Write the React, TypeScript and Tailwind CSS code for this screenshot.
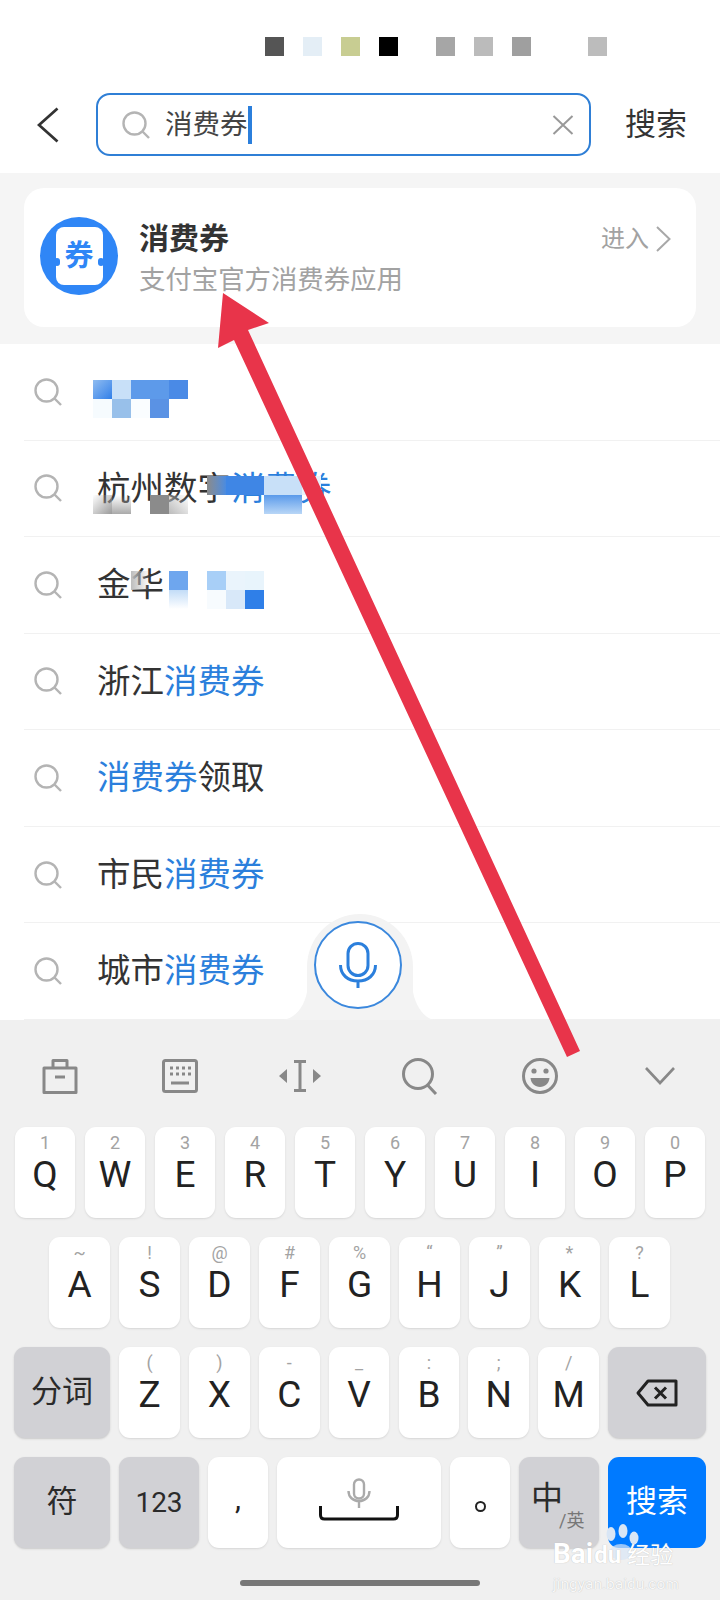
import type { ReactNode } from "react";

const STATUS_DOTS = [
  "bg-[#555555]",
  "bg-[#e4eef6]",
  "bg-[#c8cd92]",
  "bg-[#000000]",
  "ml-[19px] bg-[#a6a6a6]",
  "bg-[#bbbbbb]",
  "bg-[#9f9f9f]",
  "ml-[38px] bg-[#bcbcbc]",
];

const ROW_1 = [
  ["1", "Q"],
  ["2", "W"],
  ["3", "E"],
  ["4", "R"],
  ["5", "T"],
  ["6", "Y"],
  ["7", "U"],
  ["8", "I"],
  ["9", "O"],
  ["0", "P"],
];

const ROW_2 = [
  ["~", "A"],
  ["!", "S"],
  ["@", "D"],
  ["#", "F"],
  ["%", "G"],
  ["“", "H"],
  ["”", "J"],
  ["*", "K"],
  ["?", "L"],
];

const ROW_3 = [
  ["(", "Z"],
  [")", "X"],
  ["-", "C"],
  ["_", "V"],
  [":", "B"],
  [";", "N"],
  ["/", "M"],
];

function SearchGlyph({ className }: { className: string }) {
  return (
    <svg viewBox="0 0 28 28" fill="none" className={className}>
      <circle cx="12.5" cy="12.5" r="11" stroke="#b4b4b4" strokeWidth="2.4" />
      <path d="M20.5 20.5 27 27" stroke="#b4b4b4" strokeWidth="2.4" />
    </svg>
  );
}

function Mosaic({ className, cells }: { className: string; cells: string[] }) {
  return (
    <div className={`absolute grid grid-cols-[repeat(12,19px)] grid-rows-[19px_19px] ${className}`}>
      {cells.map((c, i) => (
        <div key={i} className={c} />
      ))}
    </div>
  );
}

function ResultRow({ children, mosaic }: { children: ReactNode; mosaic?: ReactNode }) {
  return (
    <div className="relative ml-6 flex items-center border-b border-[#f1f1f1]">
      <SearchGlyph className="ml-[10px] h-7 w-7" />
      <div className="ml-[35px] text-[33.5px] leading-none whitespace-nowrap text-[#333333]">{children}</div>
      {mosaic}
    </div>
  );
}

function Blue({ children }: { children: ReactNode }) {
  return <span className="text-[#2b7fdc]">{children}</span>;
}

function LetterKey({ hint, letter, className = "w-[60px]" }: { hint: string; letter: string; className?: string }) {
  return (
    <div className={`flex flex-col items-center rounded-[11px] bg-white pt-[5px] shadow-[0_1px_2px_#d6d6d6] ${className}`}>
      <span className="h-[22px] text-[18px] leading-[22px] text-[#a3a3a3]">{hint}</span>
      <span className="text-[37px] leading-[42px] text-[#222222]">{letter}</span>
    </div>
  );
}

function GreyKey({ children, className }: { children: ReactNode; className: string }) {
  return (
    <div className={`relative flex items-center justify-center rounded-[11px] bg-[#d1d1d5] text-[#2b2b2b] shadow-[0_1px_2px_#c9c9c9] ${className}`}>
      {children}
    </div>
  );
}

export default function App() {
  return (
    <div className="relative flex h-[1600px] w-[720px] flex-col overflow-hidden bg-white font-['Roboto','Noto_Sans_CJK_SC',sans-serif]">
      {/* status bar, blurred into squares */}
      <div className="flex h-[93px] gap-[19px] pt-[37px] pl-[265px]">
        {STATUS_DOTS.map((c, i) => (
          <div key={i} className={`h-[19px] w-[19px] ${c}`} />
        ))}
      </div>

      {/* search header */}
      <div className="flex h-[80px] items-start">
        <svg viewBox="0 0 22 36" fill="none" className="mt-[14px] ml-[37px] h-[36px] w-[22px]">
          <path d="M20.5 1.5 2 18l18.5 16.5" stroke="#333333" strokeWidth="2.8" />
        </svg>
        <div className="ml-[37px] flex h-[63px] w-[495px] items-center rounded-[14px] border-2 border-[#2f7fd6]">
          <SearchGlyph className="ml-[24px] h-7 w-7" />
          <span className="ml-[15px] text-[27.5px] leading-none text-[#444444]">消费券</span>
          <div className="h-[38px] w-1 bg-[#2b7fdc]" />
          <svg viewBox="0 0 22 20" fill="none" className="ml-auto mr-[15px] h-5 w-[22px]">
            <path d="M1.5 1 20.5 19M20.5 1 1.5 19" stroke="#999999" strokeWidth="2" />
          </svg>
        </div>
        <span className="ml-[34px] mt-[13px] text-[31px] leading-[38px] text-[#333333]">搜索</span>
      </div>

      {/* app result card */}
      <div className="h-[171px] bg-[#f5f5f5] px-6 pt-[15px]">
        <div className="flex h-[139px] rounded-[20px] bg-white pt-[29px] pl-4 pr-[25px]">
          <div className="relative flex h-[78px] w-[78px] items-center justify-center rounded-full bg-[#2f86f6]">
            <div className="flex h-[58px] w-[47px] items-center justify-center rounded-[8px] bg-white text-[29px] leading-none font-bold text-[#2f86f6]">
              券
            </div>
            <div className="absolute top-[41px] left-[14px] h-[8px] w-[6px] rounded-full bg-[#2f86f6]" />
            <div className="absolute top-[41px] right-[14px] h-[8px] w-[6px] rounded-full bg-[#2f86f6]" />
          </div>
          <div className="ml-[21px] flex flex-col">
            <span className="text-[30px] leading-[44px] font-bold text-[#333333]">消费券</span>
            <span className="mt-[-1px] text-[26.4px] leading-[40px] text-[#a2a2a2]">支付宝官方消费券应用</span>
          </div>
          <div className="ml-auto flex h-[44px] items-center gap-[7px]">
            <span className="text-[24px] text-[#a2a2a2]">进入</span>
            <svg viewBox="0 0 15 26" fill="none" className="h-[26px] w-[15px]">
              <path d="M1 1l12.5 12L1 25" stroke="#a8a8a8" strokeWidth="2" />
            </svg>
          </div>
        </div>
      </div>

      {/* suggestions */}
      <div className="grid h-[676px] grid-rows-7">
        <ResultRow
          mosaic={
            <Mosaic
              className="top-[36px] left-[69px]"
              cells={[
                "bg-linear-to-br from-[#8fbcf0] to-[#2f7fe8]",
                "bg-[#c8e0f8]",
                "bg-[#5d9aea]",
                "bg-[#5d9aea]",
                "bg-[#4a8ae6]",
                "", "", "", "", "", "", "",
                "bg-[#f6fbfe]",
                "bg-[#98c0ea]",
                "bg-[#fafdff]",
                "bg-[#5a92e4]",
              ]}
            />
          }
        >
          <Blue>&nbsp;</Blue>
        </ResultRow>
        <ResultRow
          mosaic={
            <Mosaic
              className="top-[35px] left-[69px]"
              cells={[
                "", "", "", "", "", "",
                "bg-linear-to-r from-[#8a8a8a] to-[#4a8be0]",
                "bg-[#3f86e5]",
                "bg-[#3f86e5]",
                "bg-[#c8e0f8]",
                "bg-[#c8e0f8]",
                "bg-[#e8f2fb]",
                "bg-linear-to-tl from-[#9a9a9a] to-transparent",
                "bg-linear-to-t from-[#aaaaaa] to-transparent",
                "",
                "bg-[#8b8b8b]",
                "bg-linear-to-tr from-[#bbbbbb] to-transparent",
                "",
                "",
                "",
                "",
                "bg-linear-to-b from-[#5a9aea] to-[#b8d6f6]",
                "bg-linear-to-b from-[#5a9aea] to-[#b8d6f6]",
              ]}
            />
          }
        >
          杭州数字<Blue>消费券</Blue>
        </ResultRow>
        <ResultRow
          mosaic={
            <Mosaic
              className="top-[34px] left-[69px]"
              cells={[
                "", "",
                "bg-linear-to-r from-[#bdbdbd] to-transparent",
                "",
                "bg-[#6ea6ee]",
                "",
                "bg-[#a8cff7]",
                "bg-[#eaf4fc]",
                "bg-[#e8f4fc]",
                "", "", "",
                "", "", "", "",
                "bg-linear-to-b from-[#c2dcf7] to-white",
                "",
                "bg-[#f7fbfe]",
                "bg-[#d8e8f9]",
                "bg-[#2f7fe8]",
              ]}
            />
          }
        >
          金华
        </ResultRow>
        <ResultRow>
          浙江<Blue>消费券</Blue>
        </ResultRow>
        <ResultRow>
          <Blue>消费券</Blue>领取
        </ResultRow>
        <ResultRow>
          市民<Blue>消费券</Blue>
        </ResultRow>
        <ResultRow>
          城市<Blue>消费券</Blue>
        </ResultRow>
      </div>

      {/* keyboard */}
      <div className="flex-1 bg-[#f0f0f0]">
        <div className="grid h-[107px] grid-cols-6 place-items-center pt-[5px]">
          <svg viewBox="0 0 36 36" fill="none" stroke="#888888" strokeWidth="3" className="h-9 w-9">
            <path d="M2 10h32v24.5H2z" strokeLinejoin="round" />
            <path d="M11 10V2.5h14V10" strokeLinejoin="round" />
            <path d="M13 19h10" />
          </svg>
          <svg viewBox="0 0 36 34" fill="none" className="h-[34px] w-9">
            <rect x="1.5" y="1.5" width="33" height="31" rx="2" stroke="#888888" strokeWidth="3" />
            <path d="M8 9h3M14 9h3M20 9h3M26 9h3M8 15h3M14 15h3M20 15h3M26 15h3" stroke="#888888" strokeWidth="3" />
            <path d="M9 24h18" stroke="#888888" strokeWidth="3" />
          </svg>
          <svg viewBox="0 0 42 32" fill="none" className="h-8 w-[42px]">
            <path d="M0 16 8 9v14zM42 16l-8-7v14z" fill="#888888" />
            <path d="M15 1.5h12M15 30.5h12M21 1.5v29" stroke="#888888" strokeWidth="3" />
          </svg>
          <svg viewBox="0 0 36 37" fill="none" className="h-[37px] w-9">
            <circle cx="16" cy="16" r="14.5" stroke="#888888" strokeWidth="3" />
            <path d="M25.5 27 34 36" stroke="#888888" strokeWidth="3" />
          </svg>
          <svg viewBox="0 0 36 36" fill="none" className="h-9 w-9">
            <circle cx="18" cy="18" r="16.5" stroke="#888888" strokeWidth="3" />
            <circle cx="12" cy="13" r="2.6" fill="#888888" />
            <circle cx="24" cy="13" r="2.6" fill="#888888" />
            <path d="M8.5 20h19c-.5 5.5-4.5 9-9.5 9s-9-3.500-9.500-9z" fill="#888888" />
          </svg>
          <svg viewBox="0 0 30 18" fill="none" className="h-[18px] w-[30px]">
            <path d="M1 1l14 15L29 1" stroke="#888888" strokeWidth="2.6" />
          </svg>
        </div>

        <div className="flex flex-col gap-[19px]">
          <div className="flex h-[91px] gap-[10px] pl-[15px]">
            {ROW_1.map(([hint, letter]) => (
              <LetterKey key={letter} hint={hint} letter={letter} />
            ))}
          </div>
          <div className="flex h-[91px] gap-[9px] pl-[49px]">
            {ROW_2.map(([hint, letter]) => (
              <LetterKey key={letter} hint={hint} letter={letter} className="w-[61px]" />
            ))}
          </div>
          <div className="flex h-[91px] gap-[9.25px] pl-[14px]">
            <GreyKey className="w-[96px] text-[31px]">分词</GreyKey>
            {ROW_3.map(([hint, letter]) => (
              <LetterKey key={letter} hint={hint} letter={letter} className="w-[60.6px]" />
            ))}
            <GreyKey className="w-[98px]">
              <svg viewBox="0 0 42 28" fill="none" className="h-7 w-[42px]">
                <path d="M12 2h28v24H12L2 14z" stroke="#222222" strokeWidth="3" strokeLinejoin="round" />
                <path d="M19 8.500l11 11M30 8.500l-11 11" stroke="#222222" strokeWidth="3" />
              </svg>
            </GreyKey>
          </div>
          <div className="flex h-[91px] gap-[9px] pl-[14px]">
            <GreyKey className="w-[96px] text-[31px]">符</GreyKey>
            <GreyKey className="w-[80px] text-[28px]">123</GreyKey>
            <div className="flex w-[60px] items-center justify-center rounded-[11px] bg-white pb-2 text-[30px] text-[#222222] shadow-[0_1px_2px_#d6d6d6]">
              ,
            </div>
            <div className="flex w-[164px] flex-col items-center rounded-[11px] bg-white pt-[21px] shadow-[0_1px_2px_#d6d6d6]">
              <svg viewBox="0 0 24 30" fill="none" className="h-[30px] w-6">
                <rect x="7" y="1.500" width="10" height="19" rx="5" stroke="#aaaaaa" strokeWidth="2.4" />
                <path d="M1.500 13c0 6 4.500 10 10.500 10s10.500-4 10.500-10M12 23v7" stroke="#aaaaaa" strokeWidth="2.4" />
              </svg>
              <svg viewBox="0 0 80 16" fill="none" className="-mt-[3px] h-4 w-20">
                <path d="M1.500 1v9c0 2.500 1.500 4 4 4h69c2.500 0 4-1.500 4-4V1" stroke="#111111" strokeWidth="3" />
              </svg>
            </div>
            <div className="flex w-[60px] items-center justify-center rounded-[11px] bg-white pt-2 text-[28px] text-[#222222] shadow-[0_1px_2px_#d6d6d6]">
              <div className="h-[11px] w-[11px] rounded-full border-2 border-[#222222]" />
            </div>
            <GreyKey className="w-[80px]">
              <span className="absolute top-[19px] left-[12px] text-[32px] leading-[44px]">中</span>
              <span className="absolute top-[52px] left-[40px] text-[18px] leading-[24px] whitespace-nowrap text-[#777777]">/英</span>
            </GreyKey>
            <div className="flex w-[98px] items-center justify-center rounded-[11px] bg-[#007aff] text-[31px] text-white">
              搜索
            </div>
          </div>
        </div>

        <div className="mx-auto mt-[32px] h-[6px] w-[240px] rounded-[3px] bg-[#777777]" />
      </div>

      {/* mic button over the list */}
      <div className="absolute top-[912px] left-[280px] flex h-[108px] w-[156px] justify-center">
        <svg viewBox="0 0 156 108" className="absolute inset-0 h-[108px] w-[156px]">
          <path d="M0 108C14 108 24 96 27 80V55a53 53 0 0 1 106 0v25c3 16 13 28 23 28z" fill="#f3f3f3" />
        </svg>
        <div className="relative mt-[9px] flex h-[88px] w-[88px] items-center justify-center rounded-full border-2 border-[#3b88dd] bg-white">
          <svg viewBox="0 0 38 46" fill="none" className="h-[46px] w-[38px]">
            <rect x="9" y="1.500" width="20" height="32" rx="10" stroke="#2b7fdc" strokeWidth="3" />
            <path d="M1.500 23c0 10 7.500 16 17.500 16s17.500-6 17.500-16M19 39v7" stroke="#2b7fdc" strokeWidth="3" />
          </svg>
        </div>
      </div>

      {/* red annotation arrow */}
      <svg viewBox="0 0 720 1600" className="pointer-events-none absolute inset-0 h-[1600px] w-[720px]">
        <polygon
          points="223,293 269,323 248,330 580,1051 567,1057 234,340 218,348"
          fill="#e8344a"
        />
      </svg>

      {/* watermark */}
      <div className="pointer-events-none absolute top-[1524px] left-[553px] flex w-[130px] flex-col">
        <svg viewBox="0 0 40 36" className="absolute top-0 left-[48px] h-[36px] w-[40px]">
          <ellipse cx="10" cy="10" rx="4.500" ry="7" fill="#d9e6f5" />
          <ellipse cx="22" cy="7" rx="4.500" ry="7" fill="#d9e6f5" />
          <ellipse cx="33" cy="14" rx="4.500" ry="6.500" fill="#d9e6f5" />
          <ellipse cx="20" cy="28" rx="11" ry="8" fill="#d9e6f5" fillOpacity="0.7" />
        </svg>
        <div className="relative mt-[14px] flex items-baseline text-[28px] leading-[32px] font-bold text-white [text-shadow:0_0_1px_#b0b0b0]">
          <span>Bai</span>
          <span className="ml-[1px] text-[24px]">du</span>
          <span className="ml-[6px] text-[23px] font-normal">经验</span>
        </div>
        <span className="mt-[3px] text-[15.500px] leading-[18px] whitespace-nowrap text-[#f8f8f8] [text-shadow:0_0_1px_#b5b5b5]">
          jingyan.baidu.com
        </span>
      </div>
    </div>
  );
}
